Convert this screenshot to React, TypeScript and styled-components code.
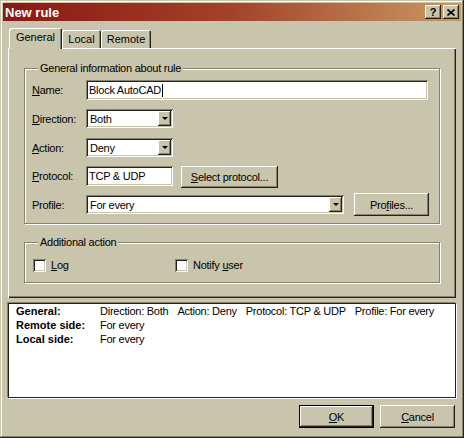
import styled, { createGlobalStyle } from "styled-components";

const face = "#c9c5ac";
const shade = "#86826f";
const dark = "#24221b";

const GlobalStyle = createGlobalStyle`
  html, body {
    margin: 0;
    padding: 0;
    background: ${face};
  }
  body {
    font-family: "Liberation Sans", Arial, sans-serif;
    font-size: 11px;
    color: #000;
  }
`;

const raised = `
  box-shadow: inset -1px -1px 0 ${dark}, inset 1px 1px 0 #fff,
    inset -2px -2px 0 ${shade}, inset 2px 2px 0 ${face};
`;

const sunken = `
  box-shadow: inset 1px 1px 0 ${shade}, inset -1px -1px 0 #fff,
    inset 2px 2px 0 ${dark}, inset -2px -2px 0 ${face};
`;

const Window = styled.div`
  width: 464px;
  height: 438px;
  box-sizing: border-box;
  padding: 3px;
  background: ${face};
  display: flex;
  flex-direction: column;
  box-shadow: inset -1px -1px 0 ${dark}, inset 1px 1px 0 ${face},
    inset -2px -2px 0 ${shade}, inset 2px 2px 0 #fff;
`;

const TitleBar = styled.div`
  height: 18px;
  flex: 0 0 18px;
  display: flex;
  align-items: center;
  justify-content: space-between;
  padding: 0 2px 0 2px;
  background: linear-gradient(90deg, #8a1712 0%, #a3422b 50%, #c99a63 100%);
`;

const Title = styled.span`
  color: #fff;
  font-weight: 700;
  font-size: 13px;
`;

const TitleButtons = styled.div`
  display: flex;
  gap: 2px;
`;

const TitleButton = styled.div`
  width: 16px;
  height: 14px;
  background: ${face};
  display: flex;
  align-items: center;
  justify-content: center;
  font-weight: 700;
  font-size: 11px;
  line-height: 14px;
  ${raised}
`;

const Body = styled.div`
  flex: 1;
  display: flex;
  flex-direction: column;
  padding: 7px 5px 7px 5px;
`;

const TabStrip = styled.div`
  display: flex;
  align-items: flex-end;
  height: 20px;
  padding-left: 1px;
  position: relative;
  z-index: 1;
`;

const Tab = styled.div<{ $w: number; $active?: boolean }>`
  width: ${(p) => p.$w}px;
  height: ${(p) => (p.$active ? 21 : 18)}px;
  margin-bottom: ${(p) => (p.$active ? -1 : 0)}px;
  box-sizing: border-box;
  display: flex;
  align-items: center;
  justify-content: center;
  padding-bottom: ${(p) => (p.$active ? 3 : 0)}px;
  background: ${face};
  border-radius: 2px 2px 0 0;
  box-shadow: inset 1px 1px 0 #fff, inset -1px 0 0 ${dark},
    inset -2px 0 0 ${shade};
`;

const Panel = styled.div`
  height: 250px;
  flex: 0 0 250px;
  box-sizing: border-box;
  padding: 14px 16px 0 16px;
  display: flex;
  flex-direction: column;
  box-shadow: inset 1px 1px 0 #fff, inset -1px -1px 0 ${dark},
    inset -2px -2px 0 ${shade};
`;

const Group = styled.fieldset<{ $top?: number; $bottom?: number }>`
  margin: ${(p) => p.$top ?? 0}px 0 0 0;
  padding: 5px 9px ${(p) => p.$bottom ?? 9}px 7px;
  border: 1px solid ${shade};
  box-shadow: 1px 1px 0 #fff, inset 1px 1px 0 #fff;
  min-width: 0;
`;

const Legend = styled.legend`
  margin-left: 6px;
  padding: 0 2px;
  line-height: 13px;
  background: ${face};
  letter-spacing: -0.25px;
`;

const Form = styled.div`
  display: grid;
  grid-template-columns: 54px 1fr;
  grid-template-rows: 20px 20px 19px 20px 19px;
  row-gap: 9px;
  align-items: start;
`;

const Label = styled.label`
  align-self: center;
  letter-spacing: -0.25px;
`;

const Line = styled.div`
  display: flex;
  align-items: flex-start;
`;

const TextBox = styled.div<{ $w: number }>`
  width: ${(p) => p.$w}px;
  height: 20px;
  box-sizing: border-box;
  background: #fff;
  padding: 0 3px;
  display: flex;
  align-items: center;
  letter-spacing: -0.25px;
  ${sunken}
`;

const Caret = styled.span`
  width: 1px;
  height: 13px;
  background: #000;
  margin-left: 1px;
`;

const Select = styled.div<{ $w: number }>`
  width: ${(p) => p.$w}px;
  height: 19px;
  box-sizing: border-box;
  background: #fff;
  padding: 2px 2px 2px 4px;
  display: flex;
  align-items: center;
  letter-spacing: -0.25px;
  ${sunken}
`;

const SelectText = styled.span`
  flex: 1;
`;

const DropButton = styled.div`
  width: 13px;
  height: 15px;
  background: ${face};
  display: flex;
  align-items: center;
  justify-content: center;
  ${raised}
  &::after {
    content: "";
    border-left: 3px solid transparent;
    border-right: 3px solid transparent;
    border-top: 3px solid #000;
  }
`;

const Button = styled.div<{ $w: number; $h?: number; $default?: boolean }>`
  width: ${(p) => p.$w}px;
  height: ${(p) => p.$h ?? 23}px;
  box-sizing: border-box;
  background: ${face};
  display: flex;
  align-items: center;
  justify-content: center;
  letter-spacing: -0.25px;
  border: ${(p) => (p.$default ? `1px solid #000` : "none")};
  ${raised}
`;

const Checks = styled.div`
  display: grid;
  grid-template-columns: 142px auto;
  align-items: center;
  height: 13px;
  padding: 5px 0 0 1px;
`;

const CheckItem = styled.label`
  display: flex;
  align-items: center;
  gap: 5px;
  line-height: 13px;
  letter-spacing: -0.25px;
`;

const CheckBox = styled.span`
  width: 13px;
  height: 13px;
  box-sizing: border-box;
  background: #fff;
  ${sunken}
`;

const Summary = styled.div`
  margin-top: 5px;
  height: 95px;
  box-sizing: border-box;
  background: #fff;
  border: 1px solid ${dark};
  box-shadow: -1px -1px 0 ${shade}, 1px 1px 0 #fff;
  padding: 0 6px 0 7px;
  display: grid;
  grid-template-columns: 84px 1fr;
  grid-auto-rows: 14px;
  align-content: start;
  line-height: 14px;
`;

const Key = styled.span`
  font-weight: 700;
`;

const Value = styled.span`
  display: flex;
  gap: 9px;
  letter-spacing: -0.25px;
  white-space: nowrap;
`;

const Footer = styled.div`
  margin-top: 7px;
  display: flex;
  justify-content: flex-end;
  gap: 6px;
  padding-right: 1px;
`;

const U = styled.u`
  text-underline-offset: 1px;
`;

export default function App() {
  return (
    <>
      <GlobalStyle />
      <Window>
        <TitleBar>
          <Title>New rule</Title>
          <TitleButtons>
            <TitleButton>?</TitleButton>
            <TitleButton>
              <svg width="8" height="7" viewBox="0 0 8 7">
                <path d="M0.5 0.5 L7.5 6.5 M7.5 0.5 L0.5 6.5" stroke="#000" strokeWidth="1.6" />
              </svg>
            </TitleButton>
          </TitleButtons>
        </TitleBar>

        <Body>
          <TabStrip>
            <Tab $w={53} $active>General</Tab>
            <Tab $w={39}>Local</Tab>
            <Tab $w={50}>Remote</Tab>
          </TabStrip>

          <Panel>
            <Group>
              <Legend>General information about rule</Legend>
              <Form>
                <Label><U>N</U>ame:</Label>
                <TextBox $w={342}>
                  Block AutoCAD<Caret />
                </TextBox>

                <Label><U>D</U>irection:</Label>
                <Select $w={87}>
                  <SelectText>Both</SelectText>
                  <DropButton />
                </Select>

                <Label><U>A</U>ction:</Label>
                <Select $w={87}>
                  <SelectText>Deny</SelectText>
                  <DropButton />
                </Select>

                <Label><U>P</U>rotocol:</Label>
                <Line>
                  <TextBox $w={87}>TCP &amp; UDP</TextBox>
                  <Button $w={97} $h={22} style={{ marginLeft: 8 }}>
                    <span><U>S</U>elect protocol...</span>
                  </Button>
                </Line>

                <Label>Profile:</Label>
                <Line>
                  <Select $w={258}>
                    <SelectText>For every</SelectText>
                    <DropButton />
                  </Select>
                  <Button $w={75} style={{ marginLeft: 10, marginTop: -2 }}>
                    <span>Pro<U>f</U>iles...</span>
                  </Button>
                </Line>
              </Form>
            </Group>

            <Group $top={12} $bottom={10}>
              <Legend>Additional action</Legend>
              <Checks>
                <CheckItem>
                  <CheckBox />
                  <span><U>L</U>og</span>
                </CheckItem>
                <CheckItem>
                  <CheckBox />
                  <span>Notify <U>u</U>ser</span>
                </CheckItem>
              </Checks>
            </Group>
          </Panel>

          <Summary>
            <Key>General:</Key>
            <Value>
              <span>Direction: Both</span>
              <span>Action: Deny</span>
              <span>Protocol: TCP &amp; UDP</span>
              <span>Profile: For every</span>
            </Value>
            <Key>Remote side:</Key>
            <Value>For every</Value>
            <Key>Local side:</Key>
            <Value>For every</Value>
          </Summary>

          <Footer>
            <Button $w={75} $default>
              <span><U>O</U>K</span>
            </Button>
            <Button $w={75}>
              <span><U>C</U>ancel</span>
            </Button>
          </Footer>
        </Body>
      </Window>
    </>
  );
}
